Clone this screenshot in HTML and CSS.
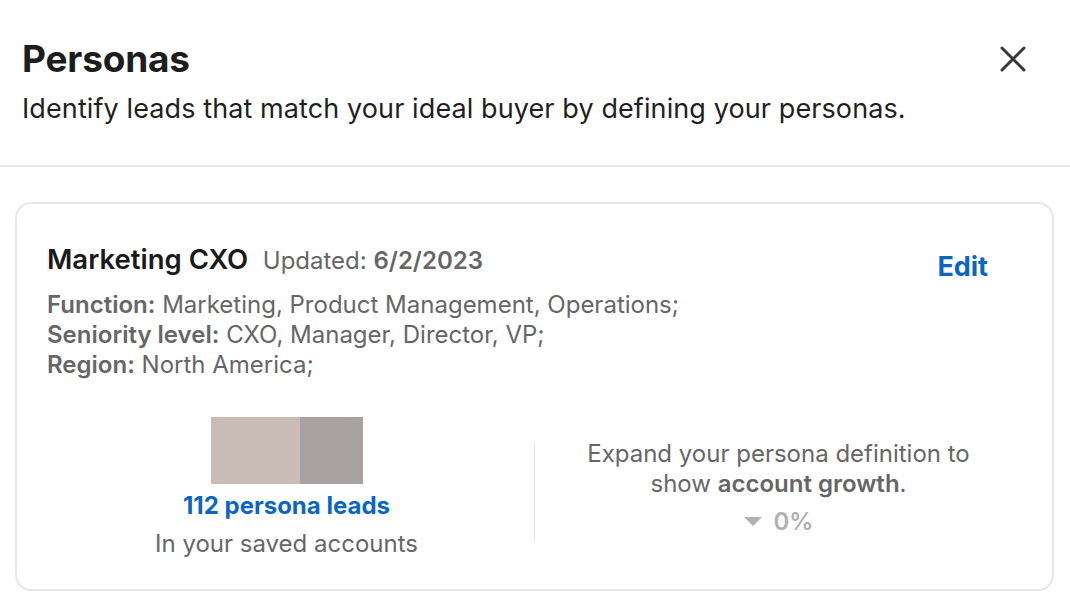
FILE: index.html
```html
<!DOCTYPE html>
<html lang="en">
<head>
  <meta charset="UTF-8">
  <meta name="viewport" content="width=device-width, initial-scale=1.0">
  <title>Personas</title>
  <link rel="stylesheet" href="styles.css">
</head>
<body>
  <div class="modal">
    <div class="header">
      <div class="header-text">
        <h1 class="title">Personas</h1>
        <p class="subtitle">Identify leads that match your ideal buyer by defining your personas.</p>
      </div>
      <button class="close" aria-label="Close">
        <svg width="26" height="26" viewBox="0 0 26 26">
          <path d="M2 2 L24 24 M24 2 L2 24" stroke="#383838" stroke-width="3" stroke-linecap="round"/>
        </svg>
      </button>
    </div>

    <div class="content">
      <div class="card">
        <div class="card-top">
          <div class="persona-name">
            <span class="name">Marketing CXO</span>
            <span class="updated">Updated: <b>6/2/2023</b></span>
          </div>
          <a class="edit" href="#">Edit</a>
        </div>
        <div class="criteria">
          <div><b>Function:</b> Marketing, Product Management, Operations;</div>
          <div><b>Seniority level:</b> CXO, Manager, Director, VP;</div>
          <div><b>Region:</b> North America;</div>
        </div>

        <div class="stats">
          <div class="stat-leads">
            <div class="bar">
              <div class="bar-seg seg-a"></div>
              <div class="bar-seg seg-b"></div>
            </div>
            <a class="leads-link" href="#">112 persona leads</a>
            <div class="muted">In your saved accounts</div>
          </div>
          <div class="stat-divider"></div>
          <div class="stat-growth">
            <div>Expand your persona definition to<br>show <b>account growth</b>.</div>
            <div class="growth">
              <svg width="18" height="10" viewBox="0 0 18 10"><path d="M0 0 H18 L9 9 Z" fill="#b0b0b0"/></svg>
              <span>0%</span>
            </div>
          </div>
        </div>
      </div>
    </div>
  </div>
</body>
</html>
```

FILE: styles.css
```css
* {
  box-sizing: border-box;
}

body {
  margin: 0;
  font-family: 'Inter', 'Noto Sans', sans-serif;
  background-color: #fff;
  color: #1d1d1d;
}

.modal {
  width: 1070px;
  height: 608px;
  overflow: hidden;
}

.header {
  display: flex;
  justify-content: space-between;
  align-items: flex-start;
  padding: 36px 44px 0 22px;
  height: 167px;
  border-bottom: 2px solid #e8e8e8;
}

.title {
  margin: 0;
  font-size: 37px;
  font-weight: 700;
  line-height: 46px;
  letter-spacing: -0.2px;
}

.subtitle {
  margin: 9px 0 0;
  font-size: 27px;
  line-height: 36px;
  letter-spacing: 0.1px;
  color: #1f1f1f;
}

.close {
  background: none;
  border: none;
  padding: 0;
  margin-top: 10px;
  cursor: pointer;
}

.content {
  padding: 35px 16px 0 15px;
}

.card {
  height: 389px;
  border: 2px solid #e6e6e6;
  border-radius: 16px;
  padding: 38px 64px 0 30px;
}

.card-top {
  display: flex;
  justify-content: space-between;
  align-items: flex-start;
}

.name {
  font-size: 27.5px;
  font-weight: 600;
  color: #1a1a1a;
  margin-right: 10px;
}

.updated {
  font-size: 24px;
  color: #666;
}

.updated b {
  font-weight: 600;
}

.edit {
  margin-top: 8px;
  font-size: 27px;
  font-weight: 700;
  color: #0a66c2;
  text-decoration: none;
}

.criteria {
  margin-top: 7px;
  font-size: 24px;
  line-height: 30px;
  color: #666;
}

.criteria b {
  font-weight: 600;
}

.stats {
  display: flex;
  align-items: flex-start;
  margin-top: 37px;
}

.stat-leads {
  width: 479px;
  display: flex;
  flex-direction: column;
  align-items: center;
  font-size: 24px;
}

.bar {
  display: flex;
  width: 152px;
  height: 67px;
}

.seg-a {
  width: 89px;
  background-color: #c9bcb6;
}

.seg-b {
  flex: 1;
  background-color: #a8a2a2;
}

.leads-link {
  margin-top: 7px;
  font-weight: 700;
  color: #0a66c2;
  text-decoration: none;
  line-height: 30px;
}

.muted {
  margin-top: 8px;
  color: #666;
  line-height: 30px;
}

.stat-divider {
  width: 1px;
  height: 96px;
  margin: 27px 0 0 8px;
  background-color: #e3e3e3;
}

.stat-growth {
  flex: 1;
  margin-top: 22px;
  padding-left: 34px;
  text-align: center;
  font-size: 24px;
  line-height: 30px;
  color: #666;
}

.stat-growth b {
  font-weight: 600;
}

.growth {
  margin-top: 8px;
  display: flex;
  justify-content: center;
  align-items: center;
  gap: 12px;
  color: #b0b0b0;
  font-weight: 600;
}
```
